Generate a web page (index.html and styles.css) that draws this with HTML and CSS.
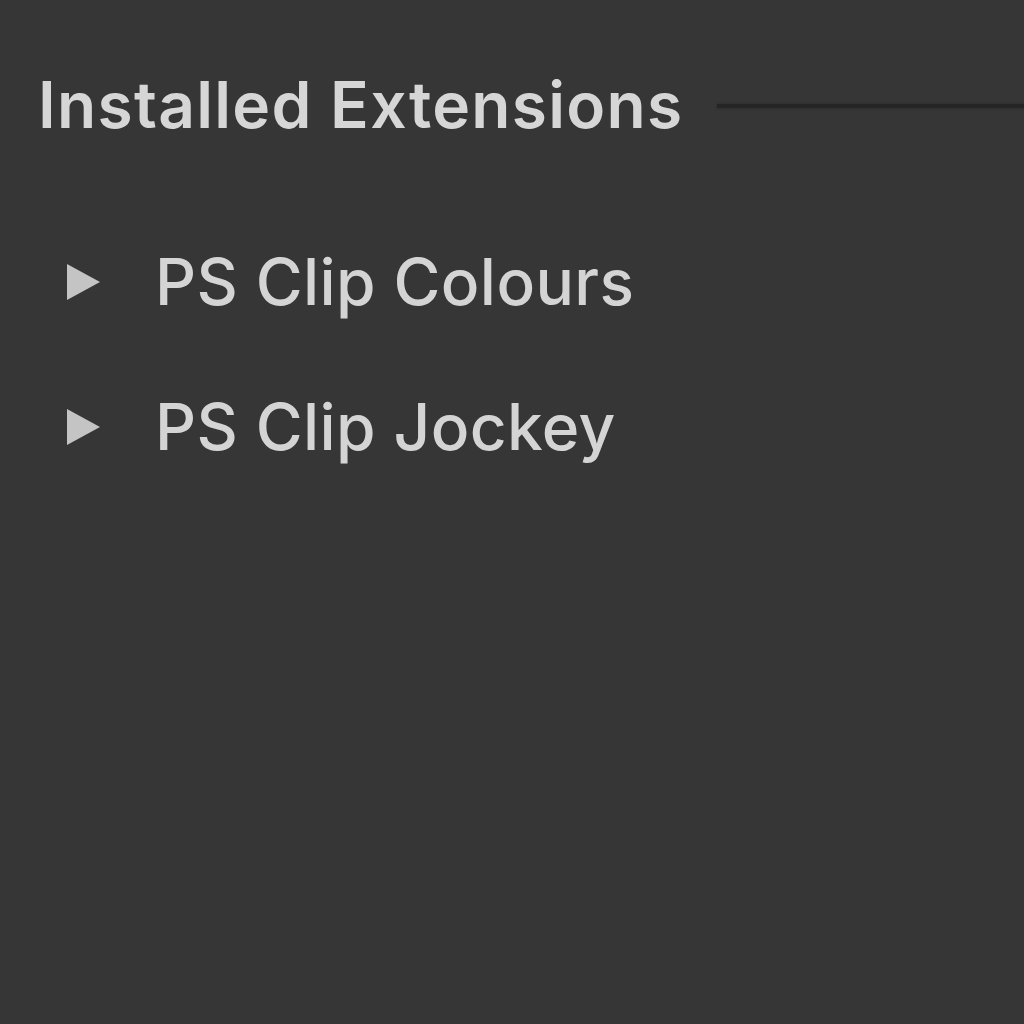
FILE: index.html
```html
<!DOCTYPE html>
<html>
<head>
<meta charset="utf-8">
<link rel="stylesheet" href="styles.css">
</head>
<body>
<div class="panel">
  <div class="header">
    <h1 class="title">Installed Extensions</h1>
    <div class="rule"></div>
  </div>
  <ul class="list">
    <li class="item"><span class="caret"></span><span class="name">PS Clip Colours</span></li>
    <li class="item"><span class="caret"></span><span class="name">PS Clip Jockey</span></li>
  </ul>
</div>
</body>
</html>
```
FILE: styles.css
```css
html, body {
  margin: 0;
  padding: 0;
  background: #363636;
}
.panel {
  width: 1024px;
  height: 1024px;
  background: #363636;
  font-family: Inter, "Open Sans", sans-serif;
  color: #d2d2d2;
  padding-top: 70px;
  box-sizing: border-box;
}
.header {
  display: flex;
  align-items: center;
  padding-left: 38px;
  gap: 34px;
}
.title {
  margin: 0;
  font-size: 64px;
  font-weight: 600;
  letter-spacing: 1.3px;
  line-height: 70px;
  white-space: nowrap;
  color: #d6d6d6;
}
.rule {
  flex: 1;
  height: 4px;
  margin-top: 2px;
  background: #252525;
  box-shadow: 0 0 3px #2a2a2a;
}
.list {
  list-style: none;
  margin: 0;
  padding: 0;
  margin-top: 104px;
}
.item {
  display: flex;
  align-items: center;
  height: 76px;
  margin-bottom: 69px;
  padding-left: 67px;
}
.caret {
  width: 0;
  height: 0;
  border-top: 18px solid transparent;
  border-bottom: 18px solid transparent;
  border-left: 33px solid #c4c4c4;
  margin-right: 55px;
}
.name {
  font-size: 64px;
  font-weight: 500;
  letter-spacing: 0.4px;
  line-height: 76px;
  white-space: nowrap;
  color: #d4d4d4;
}
```
